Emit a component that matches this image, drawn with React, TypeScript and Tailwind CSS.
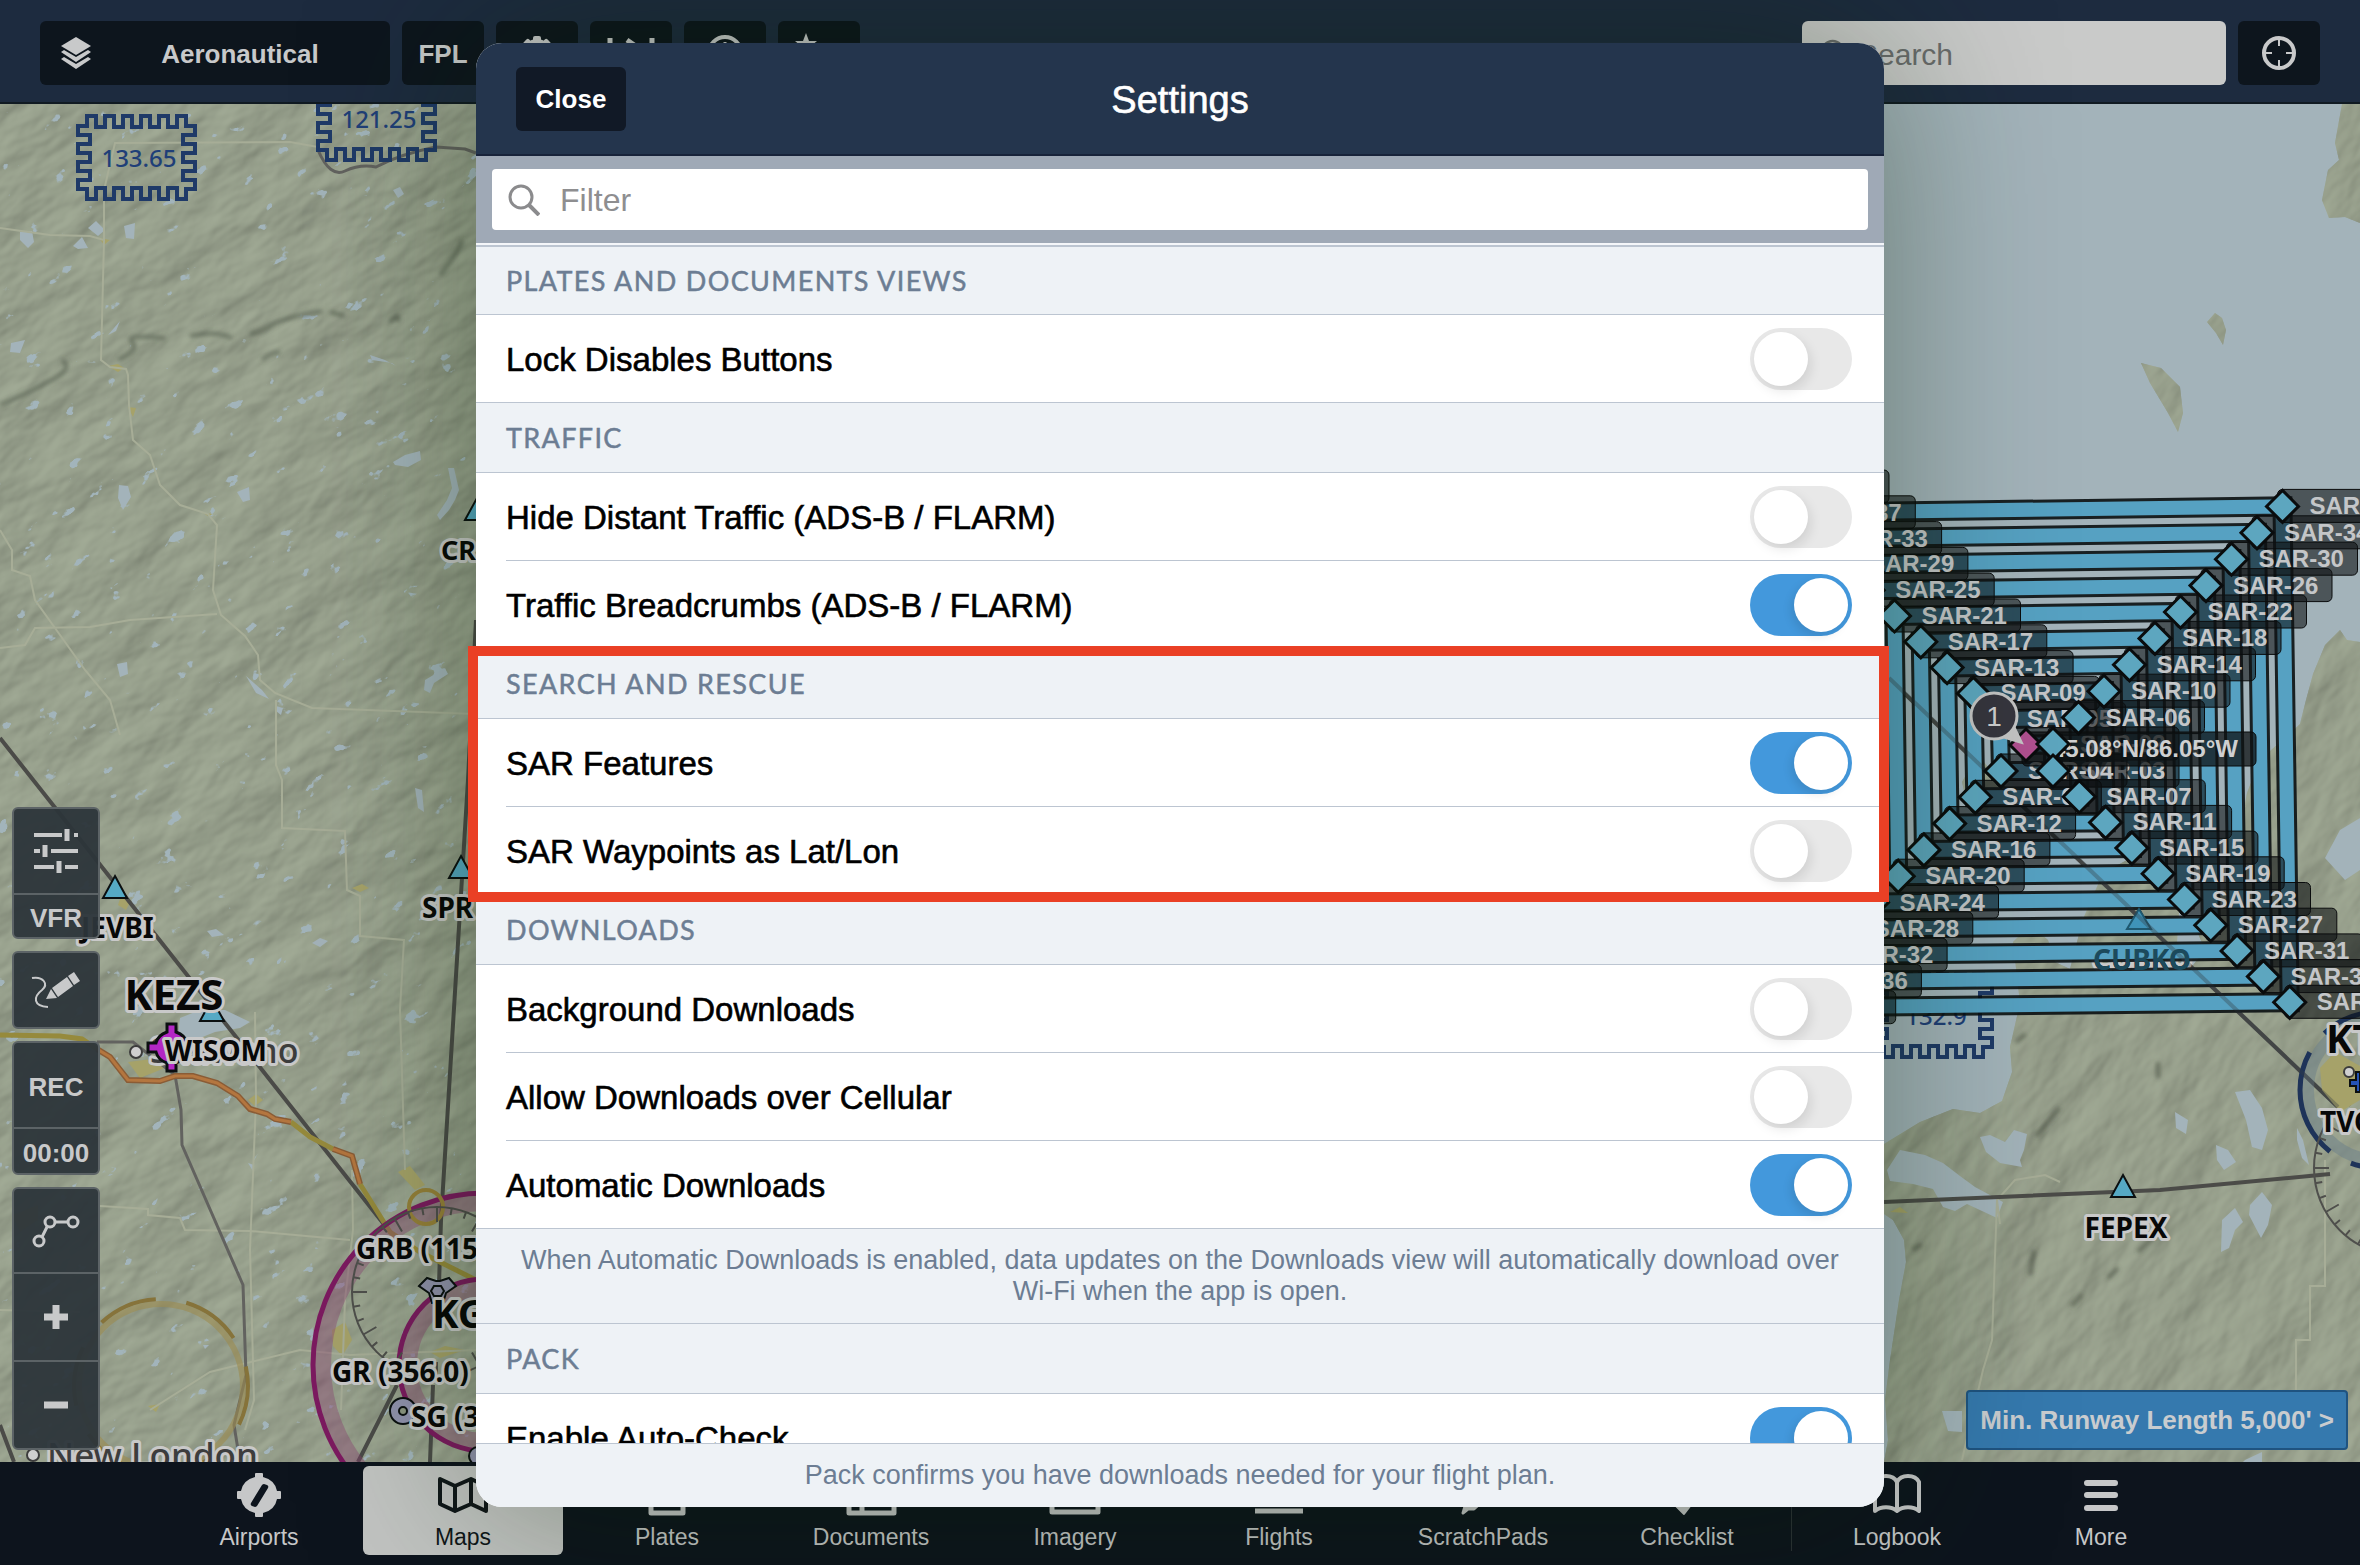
import React from "react";
import { Search } from "lucide-react";

/* ---------- Map geometry ---------- */

type Point = [number, number];

// Right-angled spiral of waypoints, walked outwards from the centre.
const spiral: Point[] = [];
for (let k = 0; k < 11; k++) {
  spiral.push([2026 - k * 26.3, 745 - k * 25.8]);
  spiral.push([2053 + k * 25.5, 744 - k * 26.4]);
  spiral.push([2053 + k * 26.3, 771 + k * 25.7]);
  spiral.push([2001 - k * 25.7, 771 + k * 26.3]);
}
const waypoints = spiral.slice(0, 41);
const trackPath = waypoints.map(([x, y], i) => `${i ? "L" : "M"}${x} ${y}`).join("");
const waypointName = (i: number) => `SAR-${String(i + 1).padStart(2, "0")}`;

// Crenellated outline used around radio frequency boxes.
function battlement(x: number, y: number) {
  let d = `M${x + 9} ${y}`;
  const run = (n: number, step: string, out: string, back: string) => {
    for (let i = 0; i < n; i++) {
      d += step;
      if (i < n - 1) d += i % 2 ? back : out;
    }
  };
  run(11, "h9", "v11", "v-11");
  d += "v10h9";
  run(7, "v9", "h-12", "h12");
  d += "h-9v10";
  run(11, "h-9", "v-11", "v11");
  d += "v-10h-9";
  run(7, "v-9", "h12", "h-12");
  return d + "h9z";
}

const peninsula =
  "M1884 1144L1920 1122L1953 1109L1980 1113L2002 1101L2012 1072L2010 1047L2020 1003L2013 942L2030 925L2048 940L2055 962L2070 969L2083 919L2103 873L2127 860L2150 866L2165 890L2180 900L2177 942L2184 950L2190 969L2205 950L2197 931L2213 915L2223 892L2236 850L2247 793L2256 770L2270 751L2285 738L2300 724L2306 700L2313 674L2325 645L2340 630L2347 640L2360 642V1462H1884L1888 1440L1885 1400L1890 1360L1899 1300L1906 1262L1904 1240L1893 1220L1884 1214Z";
const islands =
  "M2342 104L2335 143L2339 160L2328 170L2322 200L2329 218L2345 217L2360 223V104ZM2141 363L2161 368L2180 387L2183 413L2178 432L2168 413L2150 383ZM2215 313L2222 318L2226 330L2223 345L2216 333L2207 322ZM1962 782L1978 754L1990 770L2002 790L1985 812L1966 800Z";
const bays =
  "M1887 1170L1900 1150L1925 1155L1943 1163L1960 1176L1975 1187L2003 1202L1997 1218L1967 1204L1955 1211L1943 1207L1933 1189L1913 1184L1890 1181ZM1980 1137L1990 1135L2005 1142L2014 1130L2027 1134L2024 1150L2020 1160L2022 1167L2000 1163L1986 1152ZM2235 1092L2250 1090L2262 1108L2268 1130L2262 1150L2252 1147L2246 1120ZM2222 1220L2235 1208L2243 1222L2235 1230L2229 1248L2221 1252ZM2250 1205L2262 1192L2272 1205L2268 1225L2261 1238L2249 1215ZM2297 1128L2303 1140L2309 1165L2302 1158L2297 1140ZM2325 858L2340 830L2360 818V870L2345 880ZM2175 1112L2188 1120L2186 1134L2176 1128ZM1942 1411L1962 1411V1432L1948 1431ZM2216 1145L2228 1150L2236 1162L2224 1170L2217 1160ZM2245 1460L2262 1452L2262 1462H2243Z";
const lakes =
  "M20 232L32 231L34 242L28 248L20 240ZM88 228L96 221L105 230L98 236ZM124 226L135 223L134 239L126 238ZM73 246L82 237L88 248L78 249ZM11 343L25 340L20 353L10 352ZM108 335L120 321L116 331ZM119 485L128 486L131 497L123 510L118 498ZM237 492L249 487L250 500L243 502ZM117 664L127 662L128 674L120 677ZM393 462L405 455L420 451L421 460L408 467L395 465ZM448 468L454 468L459 490L455 500L449 510L440 520L437 515L447 500L452 488ZM370 355L385 360L396 366L392 363L372 360ZM425 680L445 668L448 674L434 683L430 693L424 690ZM246 676L262 690L269 699L256 693ZM276 706L283 708L281 715L276 711ZM393 190L400 187L404 194L398 198ZM180 1018L200 1010L225 1010L250 1022L240 1028L215 1032L195 1040L178 1034ZM312 943L320 938L328 941L320 947ZM415 788L422 790L424 812L418 808ZM207 931L216 929L224 935L212 937ZM248 1163L254 1165L253 1171ZM203 1345L209 1345L205 1349Z";
const towns =
  "M99 238L110 240L104 245ZM108 366L118 364L124 368L118 372ZM128 407L136 408L133 417ZM203 513L213 514L208 516ZM118 905L123 890L130 902L126 910ZM352 888L362 884L369 888L360 892ZM128 1062L160 1058L165 1068L140 1078ZM248 1100L256 1094L263 1100L255 1106ZM398 1172L410 1166L425 1185L415 1190ZM332 1330L345 1322L352 1340L342 1356L333 1346ZM430 1352L445 1346L465 1350L440 1358ZM12 1215L38 1205L38 1220L20 1232ZM1890 1212L1900 1207L1908 1213ZM148 1406L160 1404L156 1412Z";
const ridges =
  "M0 405Q30 392 52 380T62 360M118 360Q140 350 132 342T165 338M190 336Q215 330 232 338M250 334Q262 332 272 325T322 311M330 312L345 316M390 322Q400 310 398 322M262 360Q272 352 280 352M440 275Q460 250 462 240";

function Fix({ x, y }: { x: number; y: number }) {
  return <path d={`M${x} ${y - 13}L${x + 12} ${y + 9}H${x - 12}Z`} fill="#56a9c4" stroke="#0b0f10" strokeWidth="2" />;
}

function MapLabel({
  x,
  y,
  size = 27,
  anchor = "start",
  fill = "#080808",
  weight = 700,
  children,
}: {
  x: number;
  y: number;
  size?: number;
  anchor?: "start" | "middle";
  fill?: string;
  weight?: number;
  children: React.ReactNode;
}) {
  return (
    <text
      x={x}
      y={y}
      fontSize={size}
      textAnchor={anchor}
      fill={fill}
      fontWeight={weight}
      stroke="#c9c9c9"
      strokeWidth="6"
      strokeLinejoin="round"
      paintOrder="stroke"
    >
      {children}
    </text>
  );
}

function Frequency({ x, y, value }: { x: number; y: number; value: string }) {
  return (
    <g>
      <path d={battlement(x, y)} fill="none" stroke="#1f3a68" strokeWidth="4" />
      <text x={x + 61} y={y + 51} fontSize="24" textAnchor="middle" fill="#1f3f78" fontWeight="500">
        {value}
      </text>
    </g>
  );
}

function ticks(cx: number, cy: number, r: number) {
  let d = "";
  for (let a = 0; a < 36; a++) {
    const t = (a * Math.PI) / 18;
    const len = a % 3 ? 7 : 15;
    d += `M${cx + r * Math.cos(t)} ${cy + r * Math.sin(t)}L${cx + (r - len) * Math.cos(t)} ${cy + (r - len) * Math.sin(t)}`;
  }
  return d;
}

function MapCanvas() {
  return (
    <svg
      className="absolute inset-0 size-full"
      viewBox="0 104 2360 1358"
      preserveAspectRatio="xMidYMid slice"
      fontFamily="'Noto Sans', 'Open Sans', sans-serif"
      role="img"
      aria-label="Aeronautical map"
    >
      <defs>
        <filter id="relief" x="0" y="0" width="100%" height="100%" colorInterpolationFilters="sRGB">
          <feTurbulence type="fractalNoise" baseFrequency="0.011 0.022" numOctaves="4" seed="11" />
          <feColorMatrix values="0 0 0 0 0  0 0 0 0 0  0 0 0 0 0  1 0 0 0 0" />
          <feGaussianBlur stdDeviation="1" />
          <feDiffuseLighting surfaceScale="5" diffuseConstant="1.12" lightingColor="#a2ab97">
            <feDistantLight azimuth="250" elevation="56" />
          </feDiffuseLighting>
        </filter>
        <filter id="ponds" x="0" y="0" width="100%" height="100%" colorInterpolationFilters="sRGB">
          <feTurbulence type="fractalNoise" baseFrequency="0.04 0.06" numOctaves="4" seed="5" />
          <feColorMatrix values="0 0 0 0 0.635  0 0 0 0 0.706  0 0 0 0 0.733  24 0 0 0 -17.6" />
        </filter>
        <filter id="soft">
          <feGaussianBlur stdDeviation="2" />
        </filter>
        <clipPath id="west">
          <rect x="0" y="104" width="480" height="1360" />
        </clipPath>
        <clipPath id="east">
          <path d={peninsula + islands} />
        </clipPath>
      </defs>

      <rect y="104" width="2360" height="1358" fill="#a3b3ba" />
      <g clipPath="url(#west)">
        <rect y="104" width="480" height="1358" fill="#939c88" />
        <g transform="rotate(-32 240 780)">
          <rect x="-700" y="-100" width="1900" height="1800" filter="url(#relief)" />
          <rect x="-700" y="-100" width="1900" height="1800" fill="#969e8a" opacity="0.55" />
          <rect x="-700" y="-100" width="1900" height="1800" filter="url(#ponds)" />
        </g>
        <path d={ridges} fill="none" stroke="#4c5446" strokeWidth="4" opacity="0.6" filter="url(#soft)" />
      </g>
      <g clipPath="url(#east)">
        <g transform="rotate(-50 2120 800)">
          <rect x="1300" y="0" width="1600" height="1700" filter="url(#relief)" />
          <rect x="1300" y="0" width="1600" height="1700" fill="#969e8a" opacity="0.6" />
        </g>
        <path d="M2072 1306L2082 1294M2108 1278L2118 1268M2138 1252L2150 1240L2164 1226M2030 1275L2034 1250M2016 1042L2026 1034M2036 1136L2060 1108M1912 1250L1922 1244M2158 1062V1078" fill="none" stroke="#3f463a" strokeWidth="4" opacity="0.6" filter="url(#soft)" />
      </g>
      <path d={lakes + bays} fill="#a3b3ba" />
      <path d={towns} fill="#a6a269" />

      {/* county lines and minor roads */}
      <g fill="none" stroke="#a7ad97" strokeWidth="2">
        <path d="M0 228L50 235L90 236L104 240L101 360L110 367L126 369L128 375L129 405L133 440L150 455L160 485L180 505L208 514L217 525L213 590L221 615L245 636L258 655L260 680L275 693L312 708L476 714" />
        <path d="M104 240V190L115 143L290 142L318 147M0 648L25 645L35 628L90 627L130 620L217 614M0 530L12 550V570L30 576L35 600L60 635L85 670L110 700L120 735M276 700V765L282 780V828L345 831L347 890L360 896V936L404 940L400 1010L405 1170" />
        <path d="M255 1012L256 1100L250 1250L254 1400L245 1430M100 1206L148 1209V1215L180 1218L185 1230L250 1231L350 1240M352 1170L353 1230L345 1300L341 1410M0 1310L80 1312M150 1410L210 1372L300 1350L350 1355L476 1350M2000 1224L1997 1200L2015 1180L2045 1175L2060 1182M1997 1200L1992 1340L1983 1370L1962 1460M2325 1160V1286H2310V1340H2296V1400" />
      </g>

      {/* airways */}
      <g fill="none" stroke="#4b4b48" strokeWidth="4">
        <path d="M0 738L49 800L390 1232M468 780L441 1220L439 1285M433 1385L430 1462M397 1385L358 1462M476 620L468 780M0 1425L14 1462" />
        <path d="M1884 674L2338 1107M1884 1202L2160 1190L2330 1174" />
      </g>
      <path
        d="M97 1042H133L175 1075L181 1110L182 1145L243 1285L246 1375L234 1425L240 1462M318 150Q330 178 345 171T376 167Q400 154 436 147L465 149L476 153"
        fill="none"
        stroke="#62625f"
        strokeWidth="3"
      />
      <path d="M0 1035L60 1036L82 1039L97 1049M291 1122L310 1137L333 1149M360 1184L390 1232L420 1252L476 1280" fill="none" stroke="#968a3c" strokeWidth="5" />
      <path d="M97 1049L110 1057L128 1080L160 1081L175 1076H193L217 1083L238 1096L250 1109L267 1114L275 1119L291 1122M333 1149L352 1156L360 1184" fill="none" stroke="#8a5c36" strokeWidth="6" />
      <path d="M97 1049L110 1057L128 1080L160 1081L175 1076H193L217 1083L238 1096L250 1109L267 1114L275 1119L291 1122M333 1149L352 1156L360 1184" fill="none" stroke="#b4763f" strokeWidth="3" />

      {/* airspace rings */}
      <g fill="none">
        <circle cx="485" cy="1365" r="163" stroke="#8a4270" strokeOpacity="0.4" strokeWidth="18" />
        <circle cx="485" cy="1365" r="172" stroke="#7c1a60" strokeWidth="5" />
        <circle cx="485" cy="1365" r="77" stroke="#8a4270" strokeOpacity="0.4" strokeWidth="18" />
        <circle cx="485" cy="1365" r="86" stroke="#7c1a60" strokeWidth="5" />
        <circle cx="161" cy="1386" r="82" stroke="#9c8c50" strokeOpacity="0.6" strokeWidth="6" />
        <circle cx="161" cy="1386" r="87" stroke="#86733a" strokeWidth="4" strokeDasharray="60 31" strokeDashoffset="20" />
        <circle cx="426" cy="1207" r="17" stroke="#97813a" strokeWidth="4" />
        <circle cx="437" cy="1292" r="85" stroke="#4f4f4c" strokeWidth="2" />
        <path d={ticks(437, 1292, 85)} stroke="#4f4f4c" strokeWidth="2" />
        <circle cx="2378" cy="1090" r="70" stroke="#6c7f8a" strokeOpacity="0.5" strokeWidth="12" />
        <circle cx="2378" cy="1090" r="78" stroke="#1e3359" strokeWidth="5" strokeDasharray="110 24" strokeDashoffset="-40" />
        <circle cx="2402" cy="1168" r="88" stroke="#4f4f4c" strokeWidth="2" />
        <path d={ticks(2402, 1168, 88)} stroke="#4f4f4c" strokeWidth="2" />
      </g>
      <path d="M2320 1068L2335 1052L2360 1066V1100L2340 1112L2322 1090Z" fill="#a6a269" />
      <path d="M2350 1080h6v-8h4v20h-4v-6h-6z" fill="#2553b4" stroke="#0b0f10" strokeWidth="2" />
      <circle cx="2349" cy="1072" r="5" fill="#cfcfcf" stroke="#3c3c3c" strokeWidth="2" />

      {/* navaids and airport symbols */}
      <path d="M419 1286L427 1278L436 1281H440L449 1278L456 1286L446 1293L443 1303H432L429 1293Z" fill="#9192ad" stroke="#0b0f10" strokeWidth="2" />
      <path d="M434 1286h7l3 5l-3 5h-7l-3 -5z" fill="#9192ad" stroke="#0b0f10" strokeWidth="2" />
      <circle cx="403" cy="1411" r="13" fill="#9192ad" stroke="#0b0f10" strokeWidth="2" />
      <circle cx="403" cy="1411" r="4" fill="#8d9681" stroke="#0b0f10" strokeWidth="2" />
      <circle cx="478" cy="1456" r="9" fill="#9192ad" stroke="#0b0f10" strokeWidth="2" />
      <circle cx="136" cy="1052" r="6" fill="#cfcfcf" stroke="#3c3c3c" strokeWidth="2" />
      <circle cx="33" cy="1455" r="6" fill="#cfcfcf" stroke="#3c3c3c" strokeWidth="2" />
      <Fix x={115} y={889} />
      <Fix x={212} y={1012} />
      <Fix x={461} y={869} />
      <Fix x={477} y={511} />
      <Fix x={2123} y={1188} />
      <Fix x={2139} y={922} />

      <MapLabel x={150} y={1063} size={34} fill="#3d3d3d" weight={500}>Shawano</MapLabel>
      <path
        d="M167 1024h9v8q9 3 11 11h8v9h-8q-2 8 -11 11v8h-9v-8q-9 -3 -11 -11h-8v-9h8q2 -8 11 -11z"
        fill="#b327c4"
        stroke="#0b0f10"
        strokeWidth="3"
      />
      <MapLabel x={47} y={1468} size={35} fill="#3d3d3d" weight={500}>New London</MapLabel>
      <MapLabel x={81} y={938} size={28}>JEVBI</MapLabel>
      <MapLabel x={174} y={1010} size={42} anchor="middle">KEZS</MapLabel>
      <MapLabel x={165} y={1061} size={28}>WISOM</MapLabel>
      <MapLabel x={422} y={918} size={28}>SPR</MapLabel>
      <MapLabel x={441} y={560}>CR</MapLabel>
      <MapLabel x={356} y={1259} size={28}>GRB (115.5)</MapLabel>
      <MapLabel x={432} y={1328} size={40}>KGRB</MapLabel>
      <MapLabel x={332} y={1382} size={28}>GR (356.0)</MapLabel>
      <MapLabel x={411} y={1427} size={28}>SG (332)</MapLabel>
      <MapLabel x={2126} y={1238} size={28} anchor="middle">FEPEX</MapLabel>
      <MapLabel x={2326} y={1053} size={40}>KTVC</MapLabel>
      <MapLabel x={2320} y={1132} size={28}>TVC</MapLabel>
      <MapLabel x={2142} y={970} size={28} anchor="middle">CUBKO</MapLabel>

      <Frequency x={78} y={116} value="133.65" />
      <Frequency x={318} y={77} value="121.25" />
      <Frequency x={1875} y={974} value="132.9" />

      {/* search pattern */}
      <path d={trackPath} fill="none" stroke="#0a0f12" strokeWidth="20" opacity="0.9" />
      <path d={trackPath} fill="none" stroke="#56a1c2" strokeWidth="14" />
      <path d="M2139 909L2151 929H2127Z" fill="#3f93b8" stroke="#1f586f" strokeWidth="2" />
      <path d="M1889 678L2338 1107" stroke="#333c42" strokeOpacity="0.35" strokeWidth="4" />
      <text x="2142" y="970" fontSize="28" fontWeight="700" textAnchor="middle" fill="#1c4a5c" aria-hidden="true">CUBKO</text>
      <g fontFamily="'Liberation Sans', Arial, sans-serif" fontSize="24" fontWeight="700">
        {waypoints.map(([x, y], i) =>
          i === 0 ? null : (
            <g key={i}>
              <rect x={x - 5} y={y - 17} width="131" height="33" rx="5" fill="#0e1113" fillOpacity="0.58" stroke="#0a0c0d" strokeWidth="1" />
              <text x={x + 27} y={y + 8} fill="#c4c6c8">
                {waypointName(i)}
              </text>
            </g>
          )
        )}
        <rect x="2022" y="732" width="234" height="34" rx="5" fill="#0e1113" fillOpacity="0.75" stroke="#0a0c0d" />
        <text x="2052" y="757" fill="#cfd0d1">45.08°N/86.05°W</text>
        {waypoints.map(([x, y], i) => (
          <path key={i} d={`M${x} ${y - 16}L${x + 16} ${y}L${x} ${y + 16}L${x - 16} ${y}Z`} fill={i === 0 ? "#b0508f" : "#5da6bf"} stroke="#0a0c0d" strokeWidth="3" />
        ))}
        <path d="M2022 743L1999 736L2013 724Z" fill="#c4c4c4" stroke="#c4c4c4" strokeWidth="2" />
        <circle cx="1994" cy="716" r="23" fill="#36353e" stroke="#c4c4c4" strokeWidth="3" />
        <text x="1994" y="726" fontSize="28" fontWeight="400" textAnchor="middle" fill="#cfcfcf">1</text>
      </g>
    </svg>
  );
}

/* ---------- Top bar ---------- */

const barButton = "flex h-16 items-center justify-center rounded-md bg-[#0d151d] text-[#c8c9ca]";

function TopBar() {
  return (
    <header className="flex h-[104px] shrink-0 items-start justify-between border-b-2 border-[#101a22] bg-[#1d2b3f] px-10 pt-[21px] text-[26px] font-bold">
      <div className="flex gap-3">
        <button className={`${barButton} relative w-[350px]`}>
          <svg className="absolute left-[19px] size-9" viewBox="0 0 36 36" fill="currentColor" aria-hidden="true">
            <path d="M17 2L32 11L17 20L2 11Z" />
            <path d="M2 17L5 15L17 22L29 15L32 17L17 27Z" />
            <path d="M2 24L5 22L17 29L29 22L32 24L17 34Z" />
          </svg>
          <span className="pt-0.5 pl-[50px]">Aeronautical</span>
        </button>
        <button className={`${barButton} w-[82px] pt-0.5`}>FPL</button>
        <button aria-label="Settings" className={`${barButton} w-[82px]`}>
          <svg className="size-9" viewBox="0 0 36 36" aria-hidden="true">
            <circle cx="18" cy="18" r="10" fill="none" stroke="currentColor" strokeWidth="8" />
            {[0, 45, 90, 135, 180, 225, 270, 315].map((a) => (
              <rect key={a} x="14" y="1" width="8" height="8" rx="2" fill="currentColor" transform={`rotate(${a} 18 18)`} />
            ))}
          </svg>
        </button>
        <button aria-label="Profile" className={`${barButton} w-[82px]`}>
          <svg className="h-8 w-12" viewBox="0 0 48 32" fill="none" stroke="currentColor" strokeWidth="5" aria-hidden="true">
            <path d="M3 1V31M45 1V31M20 3L30 10L20 17" />
          </svg>
        </button>
        <button aria-label="Timer" className={`${barButton} w-[82px]`}>
          <svg className="size-9" viewBox="0 0 36 36" fill="none" stroke="currentColor" strokeWidth="4" aria-hidden="true">
            <circle cx="18" cy="18" r="16" />
            <path d="M18 7V18" strokeWidth="3" />
            <path d="M12 8V12M24 8V12" strokeWidth="2" />
          </svg>
        </button>
        <button aria-label="Favorites" className={`${barButton} w-[82px] pr-[26px]`}>
          <svg className="h-10 w-[22px]" viewBox="0 0 22 40" fill="currentColor" aria-hidden="true">
            <path d="M11 0L14 8H22L16 13L18 22L11 17L4 22L6 13L0 8H8ZM0 28H22V32H0Z" />
          </svg>
        </button>
      </div>
      <div className="flex gap-3">
        <label className="flex h-16 w-[424px] items-center gap-2 rounded-md bg-[#c9cac9] px-4 text-[#6a6c6c]">
          <Search className="size-8" />
          <span className="sr-only">Search map</span>
          <input className="min-w-0 flex-1 bg-transparent pt-0.5 text-[30px] font-normal outline-none placeholder:text-[#6a6c6c]" placeholder="Search" />
        </label>
        <button aria-label="Center on position" className={`${barButton} w-[82px]`}>
          <svg className="size-9" viewBox="0 0 36 36" fill="none" stroke="currentColor" aria-hidden="true">
            <circle cx="18" cy="18" r="15" strokeWidth="4" />
            <path d="M18 4V11M18 25V32M4 18H11M25 18H32" strokeWidth="2" />
          </svg>
        </button>
      </div>
    </header>
  );
}

/* ---------- Map tools ---------- */

const toolGroup = "flex flex-col divide-y-2 divide-[#5c6366] overflow-hidden rounded-md border-2 border-[#5c6366] bg-[#2c353a]/95";
const tool = "flex w-full items-center justify-center";

function MapTools() {
  return (
    <div className="absolute bottom-3 left-3 flex w-[88px] flex-col gap-3 text-[26px] font-bold text-[#c8c9ca]">
      <div className={toolGroup}>
        <button aria-label="Map settings" className={`${tool} h-[86px]`}>
          <svg className="h-[46px] w-11" viewBox="0 0 44 46" stroke="currentColor" strokeWidth="4" aria-hidden="true">
            <path d="M0 7H28M40 7H44M0 23H6M17 23H44M0 39H20M31 39H44" />
            <path d="M33 1V13M11 17V29M25 33V45" strokeWidth="5" />
          </svg>
        </button>
        <button className={`${tool} h-[42px] pt-1`}>VFR</button>
      </div>
      <div className={toolGroup}>
        <button aria-label="Annotate" className={`${tool} h-[74px]`}>
          <svg className="h-10 w-[50px]" viewBox="0 0 50 40" fill="currentColor" aria-hidden="true">
            <path d="M1 8C12 6 18 14 11 20C2 27 2 36 17 37" fill="none" stroke="currentColor" strokeWidth="2" />
            <path d="M15 29L20 19L26 28ZM21 18L36 7L42 16L27 27ZM37 6L43 2L49 11L43 15Z" />
          </svg>
        </button>
      </div>
      <div className={toolGroup}>
        <button className={`${tool} h-[86px] pt-1`}>REC</button>
        <span className="flex h-11 items-center justify-center pt-1">00:00</span>
      </div>
      <div className={toolGroup}>
        <button aria-label="Measure" className={`${tool} h-[85px]`}>
          <svg className="h-10 w-12" viewBox="0 0 48 40" fill="none" stroke="currentColor" strokeWidth="3" aria-hidden="true">
            <circle cx="7" cy="30" r="5" />
            <circle cx="18" cy="11" r="5" />
            <circle cx="41" cy="11" r="5" />
            <path d="M10 26L15 16M23 11H36" />
          </svg>
        </button>
        <button aria-label="Zoom in" className={`${tool} h-[88px]`}>
          <svg className="size-6" viewBox="0 0 24 24" stroke="currentColor" strokeWidth="7" aria-hidden="true"><path d="M0 12H24M12 0V24" /></svg>
        </button>
        <button aria-label="Zoom out" className={`${tool} h-[86px]`}>
          <svg className="size-6" viewBox="0 0 24 24" stroke="currentColor" strokeWidth="7" aria-hidden="true"><path d="M0 12H24" /></svg>
        </button>
      </div>
    </div>
  );
}

/* ---------- Bottom navigation ---------- */

function NavIcon({ children }: { children: React.ReactNode }) {
  return (
    <svg className="h-11 w-[52px]" viewBox="0 0 52 44" fill="none" stroke="currentColor" strokeWidth="5" strokeLinejoin="round" aria-hidden="true">
      {children}
    </svg>
  );
}

const tabs: { label: string; icon: React.ReactNode; active?: boolean; divided?: boolean }[] = [
  {
    label: "Airports",
    icon: (
      <path
        transform="translate(4 0)"
        fill="currentColor"
        stroke="none"
        fillRule="evenodd"
        d="M19 0h6q1 0 1 1v3q12 3 14 14h3q1 0 1 1v6q0 1 -1 1h-3q-2 11 -14 14v3q0 1 -1 1h-6q-1 0 -1 -1v-3q-12 -3 -14 -14h-3q-1 0 -1 -1v-6q0 -1 1 -1h3q2 -11 14 -14v-3q0 -1 1 -1zM25 12L14 30q-1 2 1 3l3 1q1 0 2 -1L31 15q1 -2 -1 -3l-3 -1q-1 0 -2 1z"
      />
    ),
  },
  { label: "Maps", active: true, icon: <path strokeWidth="4" d="M3 6L18 13L34 6L49 13V38L34 31L18 38L3 31ZM18 13V38M34 6V31" /> },
  { label: "Plates", icon: <path d="M10 4H42V40H10ZM18 14H34M18 24H34" /> },
  { label: "Documents", icon: <path d="M4 6H49V40H4ZM17 6V40" /> },
  { label: "Imagery", icon: <path d="M3 6H49V39H3ZM8 32L20 20L30 30L36 24L46 32" /> },
  { label: "Flights", icon: <path fill="currentColor" d="M2 38H50M8 26L44 10L40 20L14 30Z" /> },
  { label: "ScratchPads", icon: <path strokeWidth="3" fill="currentColor" d="M6 40L9 30L36 4L44 12L17 36L11 36Z" /> },
  { label: "Checklist", icon: <path fill="currentColor" strokeWidth="2" d="M8 26L14 20L22 28L42 6L47 10L23 41Z" /> },
  { label: "Logbook", divided: true, icon: <path strokeWidth="4" d="M26 9C22 1 8 1 4 9V38C10 33 20 33 26 38C32 33 42 33 48 38V9C44 1 30 1 26 9ZM26 9V38" /> },
  { label: "More", icon: <path strokeWidth="6" strokeLinecap="round" d="M12 10H40M12 22H40M12 35H40" /> },
];

function BottomNav() {
  return (
    <nav className="flex h-[103px] shrink-0 justify-center gap-1 bg-[#0d141d] pt-1 pb-[10px]">
      {tabs.map((t) => (
        <React.Fragment key={t.label}>
          {t.divided && <span className="my-1 w-0.5 border-l border-[#2b3236]" />}
          <a
            href="#"
            aria-current={t.active ? "page" : undefined}
            className={
              t.active
                ? "flex w-[200px] flex-col items-center gap-1 rounded-md bg-[#c2c4c2] pt-[7px] text-[23px] leading-8 text-[#101619]"
                : "flex w-[200px] flex-col items-center gap-1 rounded-md pt-[7px] text-[23px] leading-8 text-[#c6c7c8]"
            }
          >
            <NavIcon>{t.icon}</NavIcon>
            {t.label}
          </a>
        </React.Fragment>
      ))}
    </nav>
  );
}

/* ---------- Settings dialog ---------- */

type Section = { title: string; rows: { label: string; on?: boolean }[]; note?: string; highlighted?: boolean };

const sections: Section[] = [
  { title: "Plates and Documents Views", rows: [{ label: "Lock Disables Buttons" }] },
  {
    title: "Traffic",
    rows: [{ label: "Hide Distant Traffic (ADS-B / FLARM)" }, { label: "Traffic Breadcrumbs (ADS-B / FLARM)", on: true }],
  },
  {
    title: "Search and Rescue",
    rows: [{ label: "SAR Features", on: true }, { label: "SAR Waypoints as Lat/Lon" }],
    highlighted: true,
  },
  {
    title: "Downloads",
    rows: [{ label: "Background Downloads" }, { label: "Allow Downloads over Cellular" }, { label: "Automatic Downloads", on: true }],
    note: "When Automatic Downloads is enabled, data updates on the Downloads view will automatically download over Wi-Fi when the app is open.",
  },
  { title: "Pack", rows: [{ label: "Enable Auto-Check", on: true }] },
];

function ToggleRow({ label, on }: { label: string; on?: boolean }) {
  return (
    <label className="ml-[30px] flex h-[88px] items-center justify-between border-b border-[#bcc5d1] pr-8 text-[33px] text-black [-webkit-text-stroke:0.6px_black] last:ml-0 last:pl-[30px]">
      <span className="pt-0.5">{label}</span>
      <input
        type="checkbox"
        role="switch"
        defaultChecked={on}
        className="h-[62px] w-[102px] appearance-none rounded-full bg-[#e8e8e8] p-1 before:block before:size-[54px] before:rounded-full before:bg-white before:shadow-[3px_5px_12px_rgba(0,0,0,0.1)] before:content-[''] checked:bg-[#4398dc] checked:before:ml-10 checked:before:shadow-[-3px_4px_10px_rgba(0,0,0,0.1)]"
      />
    </label>
  );
}

function SettingsDialog() {
  return (
    <div className="pointer-events-none absolute inset-0 flex justify-center pt-[43px] pb-[58px]">
      <div
        role="dialog"
        aria-labelledby="settings-title"
        className="pointer-events-auto flex w-full max-w-[1408px] flex-col rounded-[26px] bg-white shadow-[0_0_180px_rgba(10,35,5,0.4)]"
      >
        <div className="grid h-[113px] shrink-0 grid-cols-[1fr_auto_1fr] items-center rounded-t-[26px] border-b-2 border-[#18233a] bg-[#24354d] px-10 text-white">
          <button className="h-16 w-[110px] rounded-md bg-[#111926] pt-0.5 text-[26px] font-bold">Close</button>
          <h1 id="settings-title" className="pt-1 text-[38px] [-webkit-text-stroke:0.6px_white]">Settings</h1>
        </div>
        <div className="shrink-0 bg-[#9fa9b6] px-4 py-[13px]">
          <label className="flex h-[61px] items-center gap-5 rounded bg-white px-4 text-[#8b8b8d]">
            <svg className="size-8 shrink-0" viewBox="0 0 32 32" fill="none" stroke="currentColor" strokeWidth="3" aria-hidden="true">
              <circle cx="13" cy="13" r="11" />
              <path d="M21 21L31 31" strokeWidth="4" />
            </svg>
            <span className="sr-only">Filter settings</span>
            <input className="min-w-0 flex-1 bg-transparent text-[32px] outline-none placeholder:text-[#8e8e90]" placeholder="Filter" />
          </label>
        </div>
        <div className="-mx-3 min-h-0 flex-1 overflow-hidden px-3">
          <div className="border-t-2 border-[#f4f6f9] bg-white">
            {sections.map((s) => (
              <section key={s.title} className="group relative">
                <h2 className="flex h-[70px] items-center border-b border-[#bcc5d1] bg-[#eef2f6] pt-0.5 pl-[30px] font-['Lato'] text-[27px] tracking-wider text-[#6c7d93] uppercase [-webkit-text-stroke:0.5px_#6c7d93] group-first:border-t-2">
                  {s.title}
                </h2>
                <div>
                  {s.rows.map((r) => (
                    <ToggleRow key={r.label} {...r} />
                  ))}
                </div>
                {s.note && (
                  <p className="border-b border-[#bcc5d1] bg-[#eef2f6] px-8 py-4 text-center text-[27px] leading-[31px] text-[#6c7d93]">{s.note}</p>
                )}
                {s.highlighted && <div className="pointer-events-none absolute -top-[3px] -right-[5px] -bottom-[7px] -left-2 z-10 border-[10px] border-[#ea4025]" />}
              </section>
            ))}
          </div>
        </div>
        <p className="flex h-16 shrink-0 items-center justify-center rounded-b-[26px] border-t border-[#bcc5d1] bg-[#eef2f6] text-[27px] text-[#6c7d93]">
          Pack confirms you have downloads needed for your flight plan.
        </p>
      </div>
    </div>
  );
}

export default function App() {
  return (
    <div className="relative flex h-screen flex-col overflow-hidden font-['Liberation_Sans',Arial,sans-serif]">
      <TopBar />
      <main className="relative min-h-0 flex-1 overflow-hidden">
        <MapCanvas />
        <MapTools />
        <button className="absolute right-3 bottom-3 h-[60px] rounded border-2 border-[#1f5380] bg-[#3579ae] px-3 text-[26px] font-bold text-[#c9cccf]">
          Min. Runway Length 5,000' &gt;
        </button>
      </main>
      <BottomNav />
      <SettingsDialog />
    </div>
  );
}
